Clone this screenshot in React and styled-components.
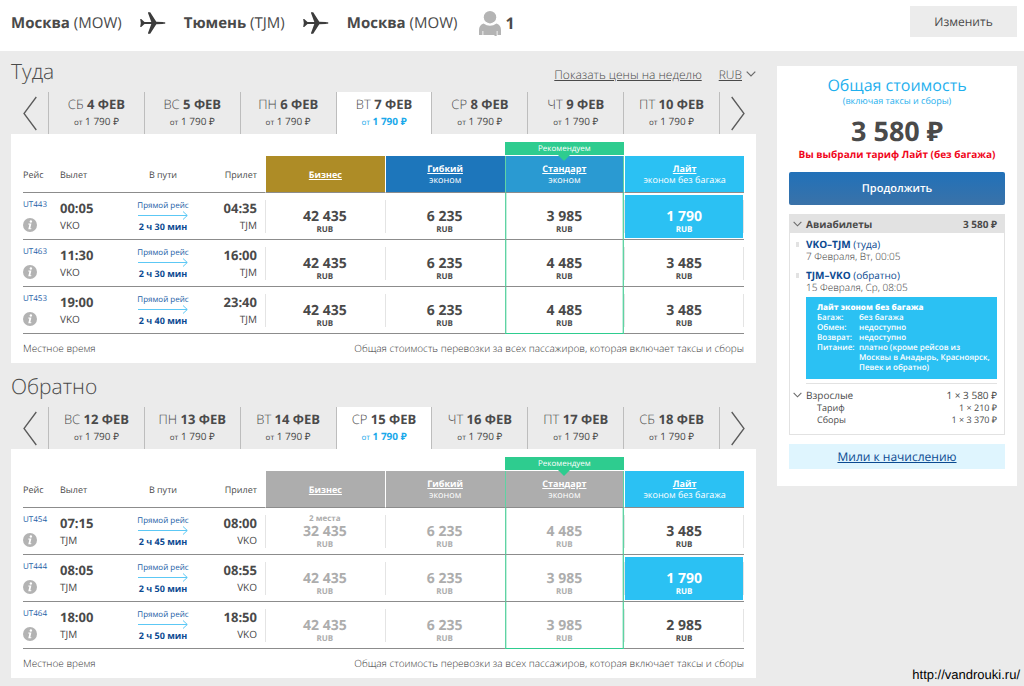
import React, { useState } from 'react'
import styled, { createGlobalStyle, css } from 'styled-components'

const GlobalStyle = createGlobalStyle`
  * {
    box-sizing: border-box;
  }
  body {
    margin: 0;
    background: #ebebeb;
    color: #4a4a4a;
    font-family: 'Open Sans', 'Noto Sans', sans-serif;
    font-size: 10px;
    text-rendering: geometricPrecision;
  }
  button {
    font-family: inherit;
    color: inherit;
    border: 0;
    padding: 0;
    background: none;
    cursor: pointer;
    text-rendering: inherit;
  }
  a {
    color: inherit;
  }
`

const fares = [
  { name: 'Бизнес', color: '#ae8c26' },
  { name: 'Гибкий', note: 'эконом', color: '#1d76bb' },
  { name: 'Стандарт', note: 'эконом', color: '#2a9ad2', recommended: true },
  { name: 'Лайт', note: 'эконом без багажа', color: '#2bc1f3' },
]

const there = {
  title: 'Туда',
  days: [['СБ', '4'], ['ВС', '5'], ['ПН', '6'], ['ВТ', '7'], ['СР', '8'], ['ЧТ', '9'], ['ПТ', '10']],
  flights: [
    { id: 'UT443', from: 'VKO', to: 'TJM', start: '00:05', end: '04:35', time: '2 ч 30 мин', prices: ['42 435', '6 235', '3 985', '1 790'] },
    { id: 'UT463', from: 'VKO', to: 'TJM', start: '11:30', end: '16:00', time: '2 ч 30 мин', prices: ['42 435', '6 235', '4 485', '3 485'] },
    { id: 'UT453', from: 'VKO', to: 'TJM', start: '19:00', end: '23:40', time: '2 ч 40 мин', prices: ['42 435', '6 235', '4 485', '3 485'] },
  ],
}

const back = {
  title: 'Обратно',
  limited: true,
  days: [['ВС', '12'], ['ПН', '13'], ['ВТ', '14'], ['СР', '15'], ['ЧТ', '16'], ['ПТ', '17'], ['СБ', '18']],
  flights: [
    { id: 'UT454', from: 'TJM', to: 'VKO', start: '07:15', end: '08:00', time: '2 ч 45 мин', seats: '2 места', prices: ['32 435', '6 235', '4 485', '3 485'] },
    { id: 'UT444', from: 'TJM', to: 'VKO', start: '08:05', end: '08:55', time: '2 ч 50 мин', prices: ['42 435', '6 235', '3 985', '1 790'] },
    { id: 'UT464', from: 'TJM', to: 'VKO', start: '18:00', end: '18:50', time: '2 ч 50 мин', prices: ['42 435', '6 235', '3 985', '2 985'] },
  ],
}

const Plane = () => (
  <svg width="26" height="24" viewBox="0 0 26 24" fill="#3c3c3c">
    <path d="M.2 8h1l3.300 3H11.300L8 2 8 1.200h2.200L16.300 10.800l6.200 .2c2 .1 3 .5 3 1s-1 .9-3 1L16.300 13.300 10.200 22.800 8 22.800 8 22 11.300 13H4.500L1.200 16H.2L.8 12z" />
  </svg>
)

const Person = () => (
  <svg width="22" height="25" viewBox="0 0 22 25" fill="#b4b4b4">
    <circle cx="11" cy="6.200" r="6.200" />
    <path d="M4.500 12.500q6.500 4.500 13 0Q22 14 22 19v5h-3.500v-4h-.8v5h-2.200v-1H4.300v-4h-.8v4H0v-5q0-5 4.500-6.500z" />
  </svg>
)

const Chevron = ({ size = 10 }) => (
  <svg width={size} height="6" viewBox="0 0 10 6" fill="none" stroke="#6a6a6a" strokeWidth="1.200">
    <path d="M.7.700 5 5 9.300.700" />
  </svg>
)

const Angle = ({ right }) => (
  <svg width="14" height="35" viewBox="0 0 14 35" fill="none" stroke="#5a5a5a" strokeWidth="1.300">
    <path d={right ? 'M.7 1 13 17.500.700 34' : 'M13.300 1 1 17.500 13.300 34'} />
  </svg>
)

const Arrow = () => (
  <svg width="50" height="9" viewBox="0 0 50 9" fill="none" stroke="#5cc8f5">
    <path d="M0 4.500h49M45 .5l4.300 4L45 8.500" />
  </svg>
)

const Info = () => (
  <svg width="14" height="14" viewBox="0 0 13 13">
    <circle cx="6.500" cy="6.500" r="6.500" fill="#b3b3b3" />
    <circle cx="7.300" cy="3.200" r="1.100" fill="#fff" />
    <path d="M5 5.200h2.800L6.800 9.600h1l-.2.900H4.900l1-4.400H4.800z" fill="#fff" />
  </svg>
)

function Direction({ data, tools, picked }) {
  const [day, setDay] = useState(3)
  const [choice, setChoice] = useState(picked)

  return (
    <section>
      <Heading>
        <Title>{data.title}</Title>
        {tools && (
          <Tools>
            <a href="#week">Показать цены на неделю</a>
            <Currency>
              <span>RUB</span>
              <Chevron />
            </Currency>
          </Tools>
        )}
      </Heading>
      <Days>
        <Turn aria-label="Раньше"><Angle /></Turn>
        {data.days.map(([week, date], i) => (
          <Day key={date} $active={i === day} onClick={() => setDay(i)}>
            <DayName>{week} <b>{date} ФЕВ</b></DayName>
            <DayPrice $active={i === day}><small>от</small> <span>1 790 ₽</span></DayPrice>
          </Day>
        ))}
        <Turn $right aria-label="Позже"><Angle right /></Turn>
      </Days>
      <Panel>
        <Flights>
          <colgroup>
            <col width="37" />
            <col width="66" />
            <col width="74" />
            <col width="65" />
            <col /><col /><col /><col />
          </colgroup>
          <thead>
            <tr>
              <Th>Рейс</Th>
              <Th>Вылет</Th>
              <Th $align="center">В пути</Th>
              <Th $align="right">Прилет</Th>
              {fares.map((fare, i) => (
                <FareTh key={fare.name} $color={data.limited && i < 3 ? '#adadad' : fare.color} $framed={fare.recommended}>
                  {fare.recommended && <Ribbon>Рекомендуем</Ribbon>}
                  <a href="#fare">{fare.name}</a>
                  {fare.note && <span>{fare.note}</span>}
                </FareTh>
              ))}
            </tr>
          </thead>
          <tbody>
            {data.flights.map((f, row) => (
              <tr key={f.id}>
                <Td>
                  <Stack>
                    <Number href="#flight">{f.id}</Number>
                    <Info />
                  </Stack>
                </Td>
                <Td>
                  <Time>{f.start}</Time>
                  <Airport>{f.from}</Airport>
                </Td>
                <Td $align="center">
                  <Direct>Прямой рейс</Direct>
                  <Arrow />
                  <Duration>{f.time}</Duration>
                </Td>
                <Td $align="right">
                  <Time>{f.end}</Time>
                  <Airport>{f.to}</Airport>
                </Td>
                {f.prices.map((price, i) => (
                  <PriceTd key={i} $framed={fares[i].recommended} $last={i === 3}>
                    <Price
                      $muted={data.limited && i < 3}
                      $picked={choice === `${row}-${i}`}
                      onClick={() => setChoice(`${row}-${i}`)}
                    >
                      <Seats>{i === 0 && f.seats}</Seats>
                      <b>{price}</b>
                      <small>RUB</small>
                    </Price>
                  </PriceTd>
                ))}
              </tr>
            ))}
          </tbody>
        </Flights>
        <Notes>
          <span>Местное время</span>
          <span>Общая стоимость перевозки за всех пассажиров, которая включает таксы и сборы</span>
        </Notes>
      </Panel>
    </section>
  )
}

export default function App() {
  return (
    <Page>
      <GlobalStyle />
      <Header>
        <Route>
          <City><b>Москва</b> (MOW)</City>
          <Plane />
          <City><b>Тюмень</b> (TJM)</City>
          <Plane />
          <City><b>Москва</b> (MOW)</City>
          <People><Person /> <b>1</b></People>
        </Route>
        <Change>Изменить</Change>
      </Header>
      <Content>
        <Main>
          <Direction data={there} tools picked="0-3" />
          <Direction data={back} picked="1-3" />
        </Main>
        <Summary>
          <SummaryTitle>Общая стоимость</SummaryTitle>
          <SummaryNote>(включая таксы и сборы)</SummaryNote>
          <Total>3 580 ₽</Total>
          <Warning>Вы выбрали тариф Лайт (без багажа)</Warning>
          <Continue>Продолжить</Continue>
          <Details>
            <DetailsHead>
              <Chevron size={9} />
              <span>Авиабилеты</span>
              <span>3 580 ₽</span>
            </DetailsHead>
            <DetailsBody>
              <Legs>
                <li>
                  <a href="#there"><b>VKO–TJM</b> (туда)</a>
                  <span>7 Февраля, Вт, 00:05</span>
                </li>
                <li>
                  <a href="#back"><b>TJM–VKO</b> (обратно)</a>
                  <span>15 Февраля, Ср, 08:05</span>
                </li>
              </Legs>
              <Rules>
                <b>Лайт эконом без багажа</b>
                <dl>
                  <dt>Багаж:</dt><dd>без багажа</dd>
                  <dt>Обмен:</dt><dd>недоступно</dd>
                  <dt>Возврат:</dt><dd>недоступно</dd>
                  <dt>Питание:</dt><dd>платно (кроме рейсов из Москвы в Анадырь, Красноярск, Певек и обратно)</dd>
                </dl>
              </Rules>
              <Divider />
              <Adults>
                <Chevron size={9} />
                <span>Взрослые</span>
                <span>1 × 3 580 ₽</span>
              </Adults>
              <Part><span>Тариф</span><span>1 × 210 ₽</span></Part>
              <Part><span>Сборы</span><span>1 × 3 370 ₽</span></Part>
            </DetailsBody>
          </Details>
          <Miles href="#miles">Мили к начислению</Miles>
        </Summary>
      </Content>
      <Source>http://vandrouki.ru/</Source>
    </Page>
  )
}

// Styled Components
const Page = styled.div`
  position: relative;
  min-height: 100vh;
`

const Header = styled.header`
  display: flex;
  justify-content: space-between;
  align-items: flex-start;
  height: 51px;
  padding: 6px 7px 0 11px;
  background: #fff;
`

const Route = styled.div`
  display: flex;
  align-items: center;
  gap: 18px;
  height: 34px;
  font-size: 15px;
`

const City = styled.span`
  white-space: nowrap;
`

const People = styled.span`
  display: flex;
  align-items: center;
  gap: 4px;
  margin-left: 4px;
  font-size: 16px;
`

const Change = styled.button`
  width: 107px;
  height: 31px;
  background: #ececec;
  font-size: 12px;
`

const Content = styled.div`
  display: flex;
  align-items: flex-start;
  gap: 21px;
  padding: 0 7px 7px 11px;
`

const Main = styled.main`
  flex: 1;
  min-width: 0;
  padding-top: 1px;
`

const Heading = styled.div`
  display: flex;
  justify-content: space-between;
  align-items: center;
  height: 40px;

  section + section & {
    height: 44px;
    padding-top: 4px;
  }
`

const Title = styled.h2`
  margin: 0;
  font-size: 21px;
  font-weight: 300;
`

const Tools = styled.div`
  display: flex;
  gap: 17px;
  padding-top: 4px;
  font-size: 12px;
  font-weight: 300;
`

const Currency = styled.button`
  display: flex;
  align-items: center;
  gap: 4px;
  font-size: 12px;
  font-weight: 300;

  span {
    text-decoration: underline;
  }
`

const Days = styled.div`
  display: flex;
  height: 42px;
`

const Turn = styled.button`
  display: flex;
  align-items: center;
  justify-content: center;
  width: 37px;
  ${({ $right }) => $right && css`
    border-left: 1px solid #bdbdbd;
  `}
`

const Day = styled.button`
  flex: 1;
  padding-bottom: 1px;
  border-left: 1px solid #bdbdbd;
  background: ${({ $active }) => ($active ? '#fff' : 'none')};
`

const DayName = styled.div`
  font-size: 13px;
  font-weight: 300;
  line-height: 18px;

  b {
    font-weight: 700;
  }
`

const DayPrice = styled.div`
  font-size: 10px;
  line-height: 16px;
  color: ${({ $active }) => ($active ? '#1ba9ea' : 'inherit')};
  font-weight: ${({ $active }) => ($active ? 700 : 400)};

  small {
    font-size: 8px;
    font-weight: 400;
  }
`

const Panel = styled.div`
  padding: 22px 12px 0;
  background: #fff;
`

const Flights = styled.table`
  width: 100%;
  table-layout: fixed;
  border-collapse: separate;
  border-spacing: 0;
`

const Th = styled.th`
  height: 37px;
  padding: 0 ${({ $align }) => ($align === 'right' ? '8px' : '0')} 0 0;
  border-bottom: 1px solid #8c8c8c;
  font-size: 9px;
  font-weight: 400;
  text-align: ${({ $align = 'left' }) => $align};
`

const FareTh = styled.th`
  position: relative;
  height: 37px;
  padding: 0;
  border-left: 1px solid ${({ $framed }) => ($framed ? '#5fd3a3' : '#fff')};
  border-right: ${({ $framed }) => ($framed ? '1px solid #5fd3a3' : '0')};
  border-bottom: 1px solid #8c8c8c;
  background: ${({ $color }) => $color};
  color: #fff;
  font-size: 9px;
  line-height: 11px;
  font-weight: 400;

  a {
    display: block;
    font-weight: 700;
  }
  span {
    display: block;
  }
`

const Ribbon = styled.div`
  position: absolute;
  left: -1px;
  right: -1px;
  bottom: 100%;
  margin-bottom: 1px;
  background: #2ecc8f;
  font-size: 8px;
  line-height: 13px;

  &::after {
    content: '';
    position: absolute;
    top: 100%;
    left: 50%;
    margin-left: -6px;
    border: 6px solid transparent;
    border-top-color: #2ecc8f;
    border-bottom: 0;
  }
`

const Td = styled.td`
  height: 47px;
  padding: 2px ${({ $align }) => ($align === 'right' ? '8px' : '0')} 0 0;
  border-bottom: 1px solid #8c8c8c;
  text-align: ${({ $align = 'left' }) => $align};
  vertical-align: middle;

  svg {
    display: block;
  }
  > svg {
    margin: 0 auto;
  }
`

const Stack = styled.div`
  display: flex;
  flex-direction: column;
  gap: 8px;
  padding-bottom: 3px;
`

const Number = styled.a`
  color: #1c5ea6;
  font-size: 8px;
  line-height: 11px;
  text-decoration: none;
`

const Time = styled.div`
  font-size: 13px;
  font-weight: 700;
  line-height: 17px;
`

const Airport = styled.div`
  font-size: 10px;
  line-height: 17px;
`

const Direct = styled.div`
  color: #1c5ea6;
  font-size: 8px;
  line-height: 10px;
`

const Duration = styled.div`
  color: #0b4a91;
  font-size: 9px;
  font-weight: 700;
  line-height: 14px;
`

const separator = 'linear-gradient(#e4e4e4, #e4e4e4)'

const PriceTd = styled.td`
  height: 47px;
  padding: 1px;
  border-bottom: 1px solid #8c8c8c;
  background: ${separator} left center / 1px 33px no-repeat${({ $last }) => $last && `, ${separator} right center / 1px 33px no-repeat`};
  ${({ $framed }) => $framed && css`
    border-left: 1px solid #5fd3a3;
    border-right: 1px solid #5fd3a3;
    background: none;
    box-shadow: inset 1px 0 #c4f0de, inset -1px 0 #c4f0de;

    tr:last-child & {
      border-bottom-color: #2ecc8f;
    }
  `}
`

const Price = styled.button`
  display: flex;
  flex-direction: column;
  align-items: center;
  width: 100%;
  height: 43px;
  padding-top: 4px;
  color: ${({ $muted, $picked }) => ($picked ? '#fff' : $muted ? '#adadad' : '#4a4a4a')};
  background: ${({ $picked }) => ($picked ? '#2bc1f3' : 'none')};

  b {
    font-size: 14px;
    line-height: 16px;
  }
  small {
    font-size: 8px;
    font-weight: 700;
    line-height: 10px;
  }
`

const Seats = styled.span`
  height: 10px;
  font-size: 8px;
  font-weight: 700;
  line-height: 10px;
`

const Notes = styled.div`
  display: flex;
  justify-content: space-between;
  color: #333;
  font-size: 10px;
  font-weight: 300;
  line-height: 29px;
`

const Summary = styled.aside`
  width: 240px;
  margin-top: 15px;
  padding: 9px 12px 17px;
  background: #fff;
`

const SummaryTitle = styled.h2`
  margin: 0;
  color: #1fb0ee;
  font-size: 16px;
  font-weight: 400;
  line-height: 21px;
  text-align: center;
`

const SummaryNote = styled.div`
  color: #1fb0ee;
  font-size: 9px;
  line-height: 10px;
  text-align: center;
`

const Total = styled.div`
  padding-top: 9px;
  font-size: 27px;
  font-weight: 700;
  line-height: 32px;
  text-align: center;
`

const Warning = styled.div`
  color: #f0061b;
  font-size: 10px;
  font-weight: 700;
  line-height: 14px;
  text-align: center;
  white-space: nowrap;
`

const Continue = styled.button`
  display: block;
  width: 100%;
  height: 33px;
  margin: 11px 0 9px;
  border-radius: 2px;
  background: linear-gradient(#2171b9, #3a72a8);
  color: #fff;
  font-size: 11px;
  font-weight: 600;
`

const Details = styled.div`
  border: 1px solid #e2e2e2;
`

const DetailsHead = styled.div`
  display: flex;
  align-items: center;
  gap: 4px;
  height: 18px;
  padding: 0 7px 0 3px;
  background: #e2e2e2;
  font-weight: 700;

  span:last-child {
    margin-left: auto;
  }
`

const DetailsBody = styled.div`
  padding: 5px 7px 8px 16px;
`

const Legs = styled.ul`
  margin: 0;
  padding: 0;
  list-style: none;

  li {
    position: relative;
    padding-bottom: 7px;
    line-height: 12px;
  }
  li::before {
    content: '';
    position: absolute;
    top: 4px;
    left: -10px;
    width: 3px;
    height: 5px;
    background: #e2e2e2;
  }
  a {
    display: block;
    color: #0b4a91;
    text-decoration: none;
  }
  span {
    color: #333;
    font-weight: 300;
  }
  li:last-child {
    padding-bottom: 4px;
  }
`

const Rules = styled.div`
  padding: 6px 4px 6px 11px;
  background: #2bc1f3;
  color: #fff;
  font-size: 8px;
  line-height: 10px;
  font-weight: 600;

  dl {
    display: grid;
    grid-template-columns: 42px 1fr;
    margin: 0;
  }
  dd {
    margin: 0;
  }
`

const Divider = styled.hr`
  height: 1px;
  margin: 4px 0;
  border: 0;
  background: #e2e2e2;
`

const Adults = styled.div`
  display: flex;
  align-items: center;
  gap: 4px;
  margin-left: -13px;
  line-height: 14px;

  span:last-child {
    margin-left: auto;
  }
`

const Part = styled.div`
  display: flex;
  justify-content: space-between;
  padding-left: 11px;
  font-size: 9px;
  line-height: 12px;
`

const Miles = styled.a`
  display: block;
  margin-top: 9px;
  background: #dff5fe;
  color: #0b4a91;
  font-size: 12px;
  line-height: 25px;
  text-align: center;
`

const Source = styled.div`
  position: absolute;
  right: 4px;
  bottom: 4px;
  color: #000;
  font-family: 'Liberation Sans', Arial, sans-serif;
  font-size: 13px;
`
